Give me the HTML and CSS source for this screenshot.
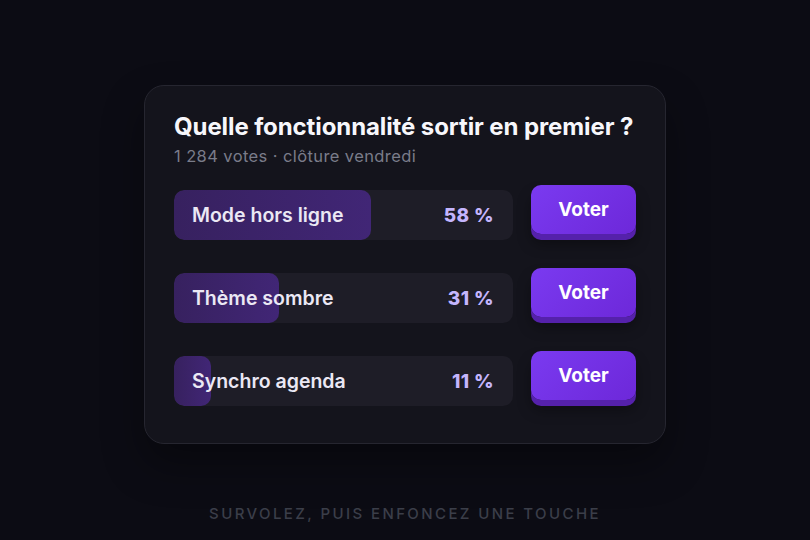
FILE: index.html
```html
<!DOCTYPE html>
<html lang="fr">
<head>
<meta charset="utf-8">
<title>Sondage</title>
<link rel="stylesheet" href="styles.css">
</head>
<body>
<main class="stage">
  <section class="poll">
    <h1 class="poll-title">Quelle fonctionnalité sortir en premier ?</h1>
    <p class="poll-meta">1 284 votes · clôture vendredi</p>
    <ul class="options">
      <li class="option">
        <div class="bar">
          <div class="bar-fill" style="width:58%"></div>
          <span class="bar-label">Mode hors ligne</span>
          <span class="bar-pct">58 %</span>
        </div>
        <button class="vote">Voter</button>
      </li>
      <li class="option">
        <div class="bar">
          <div class="bar-fill" style="width:31%"></div>
          <span class="bar-label">Thème sombre</span>
          <span class="bar-pct">31 %</span>
        </div>
        <button class="vote">Voter</button>
      </li>
      <li class="option">
        <div class="bar">
          <div class="bar-fill" style="width:11%"></div>
          <span class="bar-label">Synchro agenda</span>
          <span class="bar-pct">11 %</span>
        </div>
        <button class="vote">Voter</button>
      </li>
    </ul>
  </section>
  <p class="hint">Survolez, puis enfoncez une touche</p>
</main>
</body>
</html>
```

FILE: styles.css
```css
* { box-sizing: border-box; }

html, body {
  margin: 0;
  height: 100%;
  background: #0c0c14;
  font-family: Inter, "Noto Sans", sans-serif;
}

.stage {
  height: 540px;
  display: flex;
  flex-direction: column;
  align-items: center;
  padding-top: 85px;
}

.poll {
  width: 522px;
  height: 359px;
  background: #14141c;
  border: 1px solid #262630;
  border-radius: 20px;
  padding: 26px 29px 0;
  box-shadow: 0 20px 40px rgba(0, 0, 0, 0.35);
}

.poll-title {
  margin: 0;
  font-size: 24px;
  line-height: 30px;
  font-weight: 700;
  color: #f7f7fb;
  letter-spacing: -0.1px;
}

.poll-meta {
  margin: 3px 0 0;
  font-size: 16.5px;
  line-height: 22px;
  color: #7a7c8a;
  letter-spacing: 0.4px;
}

.options {
  list-style: none;
  margin: 23px 0 0;
  padding: 0;
  display: flex;
  flex-direction: column;
  gap: 33px;
}

.option {
  display: flex;
  align-items: flex-end;
  gap: 18px;
  height: 50px;
}

.bar {
  position: relative;
  flex: 1;
  height: 50px;
  border-radius: 10px;
  background: #1e1d27;
  display: flex;
  align-items: center;
  justify-content: space-between;
  padding: 0 19px 0 18px;
  overflow: hidden;
}

.bar-fill {
  position: absolute;
  left: 0;
  top: 0;
  bottom: 0;
  border-radius: 10px;
  background: linear-gradient(90deg, #37215f, #412676);
}

.bar-label,
.bar-pct {
  position: relative;
  font-size: 19.5px;
  font-weight: 600;
}

.bar-label { color: #ebe8f4; }

.bar-pct {
  color: #c4b5fd;
  font-size: 19px;
  font-weight: 800;
  letter-spacing: 0.4px;
}

.vote {
  width: 105px;
  height: 49px;
  margin-bottom: 6px;
  border: 0;
  border-radius: 10px;
  background: linear-gradient(135deg, #7a3af0, #6d28d9);
  box-shadow: 0 6px 0 #5521ab, 0 10px 14px rgba(0, 0, 0, 0.35);
  color: #ffffff;
  font-family: inherit;
  font-size: 19px;
  font-weight: 700;
  cursor: pointer;
}

.hint {
  margin: 60px 0 0;
  font-size: 15px;
  letter-spacing: 2.4px;
  text-transform: uppercase;
  color: #3b3e49;
  font-weight: 500;
}
```
